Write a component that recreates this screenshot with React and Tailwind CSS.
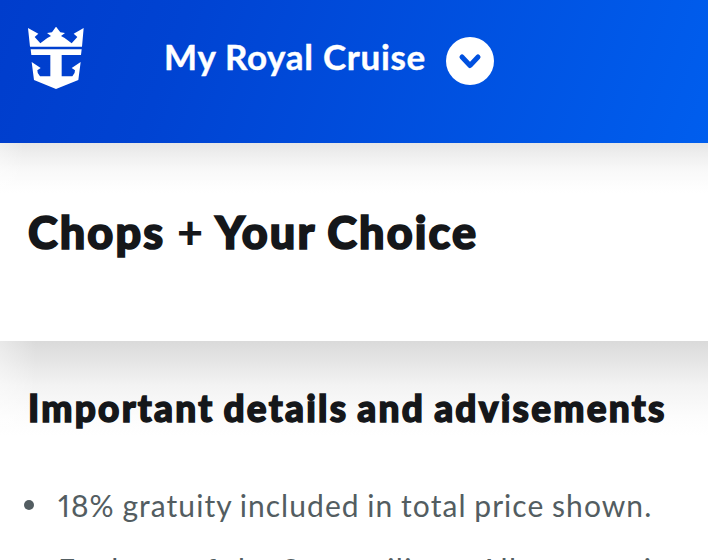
import React from "react";

const DETAILS = [
  { text: "18% gratuity included in total price shown.", spacing: "tracking-[1.05px] [word-spacing:-1px]" },
  { text: "Explorer of the Seas sailings: All reservations", spacing: "tracking-[1.35px]" },
];

const CrownAnchor = () => (
  <svg width="56" height="62" viewBox="0 0 168 186" fill="#fff" aria-label="Crown and anchor">
    <path d="M0 3 L31 20 L20 30 L37 49 L58 33 L69 27 L57 18 L72 16 L84 -1 L97 16 L111 18 L99 27 L110 33 L131 49 L148 30 L137 20 L167 3 L162 59 H6 Z" />
    <path d="M8 67 H161 L159 84 H101 V148 H133 Q142 140 141 130 L131 123 L158 105 L151 159 L84 186 L18 159 L11 105 L38 123 L28 130 Q27 140 36 148 H67 V84 H10 Z" />
  </svg>
);

const Header = () => (
  <header className="h-[143px] shrink-0 bg-[linear-gradient(110deg,#003dcc_0%,#0043d2_25%,#005eee_100%)] pt-[27px] pl-[28px] text-white">
    <div className="flex items-start">
      <CrownAnchor />
      <span className="-mt-px ml-[80px] w-[262px] text-[35px] leading-[60px] font-bold tracking-[0.7px] whitespace-nowrap [-webkit-text-stroke:0.4px_#fff]">
        My Royal Cruise
      </span>
      <button className="mt-[10px] ml-5 flex size-12 items-center justify-center rounded-full bg-white">
        <svg width="24" height="18" viewBox="0 0 24 18" fill="none">
          <path d="M4 5 L12 13.5 L20 5" stroke="#0050df" strokeWidth="5" strokeLinecap="round" strokeLinejoin="round" />
        </svg>
      </button>
    </div>
  </header>
);

const App = () => {
  return (
    <div className="flex h-[560px] w-[708px] flex-col overflow-hidden bg-white font-['Lato',sans-serif] text-[#15171a]">
      <Header />
      <section className="h-[198px] shrink-0 bg-[linear-gradient(90deg,#ffffff55_0px,#ffffff00_24px),linear-gradient(180deg,#e6e6e6_0px,#efefef_12px,#f9f9f9_28px,#ffffff_50px)] pt-[59px] pl-[28px]">
        <h1 className="text-[45px] leading-[60px] font-black tracking-[2.1px] [word-spacing:-1px] whitespace-nowrap [-webkit-text-stroke:1.7px_#15171a]">
          Chops <span className="[-webkit-text-stroke:0px]">+</span> Your Choice
        </h1>
      </section>
      <main className="flex-1 bg-[linear-gradient(90deg,#ffffff66_0px,#ffffff00_36px),linear-gradient(180deg,#dadada_0px,#e5e5e5_20px,#f3f3f3_45px,#fcfcfc_75px,#ffffff_95px)] pt-[42px] pl-[28px]">
        <h2 className="text-[37px] leading-[50px] font-black tracking-[2.25px] [word-spacing:-2px] whitespace-nowrap [-webkit-text-stroke:1.5px_#15171a]">
          Important details and advisements
        </h2>
        <ul className="mt-[47px] text-[30px] leading-[50px] text-[#535d61]">
          {DETAILS.map(({ text, spacing }) => (
            <li key={text} className="mb-[14px] flex items-center whitespace-nowrap">
              <span className="mr-[24px] -ml-[4px] size-[10px] shrink-0 rounded-full bg-[#535d61]" />
              <span className={`proportional-nums ${spacing}`}>{text}</span>
            </li>
          ))}
        </ul>
      </main>
    </div>
  );
};

export default App;
